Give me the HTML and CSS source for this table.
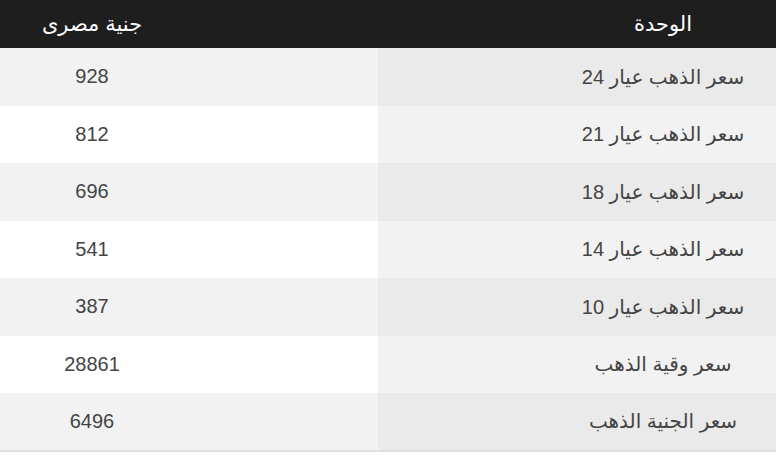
FILE: index.html
```html
<!DOCTYPE html>
<html lang="ar" dir="rtl">
<head>
<meta charset="utf-8">
<title>أسعار الذهب</title>
<link rel="stylesheet" href="styles.css">
</head>
<body>
<table class="price-table">
  <thead>
    <tr>
      <th class="unit">الوحدة</th>
      <th class="price">جنية مصرى</th>
    </tr>
  </thead>
  <tbody>
    <tr><td class="unit">سعر الذهب عيار 24</td><td class="price">928</td></tr>
    <tr><td class="unit">سعر الذهب عيار 21</td><td class="price">812</td></tr>
    <tr><td class="unit">سعر الذهب عيار 18</td><td class="price">696</td></tr>
    <tr><td class="unit">سعر الذهب عيار 14</td><td class="price">541</td></tr>
    <tr><td class="unit">سعر الذهب عيار 10</td><td class="price">387</td></tr>
    <tr><td class="unit">سعر وقية الذهب</td><td class="price">28861</td></tr>
    <tr><td class="unit">سعر الجنية الذهب</td><td class="price">6496</td></tr>
  </tbody>
</table>
</body>
</html>
```
FILE: styles.css
```css
html, body {
  margin: 0;
  padding: 0;
  background: #ffffff;
}

.price-table {
  width: 776px;
  border-collapse: collapse;
  border-spacing: 0;
  table-layout: fixed;
  font-family: "Liberation Sans", "DejaVu Sans", sans-serif;
  font-size: 20px;
  color: #444444;
  border-bottom: 2px solid #e0e0e0;
}

.price-table th,
.price-table td {
  text-align: center;
  font-weight: normal;
  box-sizing: border-box;
}

.price-table .unit {
  width: 398px;
  padding: 0 0 0 172px;
}

.price-table .price {
  width: 378px;
  padding: 0 194px 0 0;
}

.price-table thead th {
  background: #1e1e1e;
  color: #ffffff;
  height: 48px;
  font-size: 21px;
}

.price-table tbody td {
  height: 57.5px;
}

.price-table tbody tr:nth-child(odd) td.price {
  background: #f2f2f2;
}

.price-table tbody tr:nth-child(odd) td.unit {
  background: #eaeaea;
}

.price-table tbody tr:nth-child(even) td.price {
  background: #ffffff;
}

.price-table tbody tr:nth-child(even) td.unit {
  background: #f2f2f2;
}
```
